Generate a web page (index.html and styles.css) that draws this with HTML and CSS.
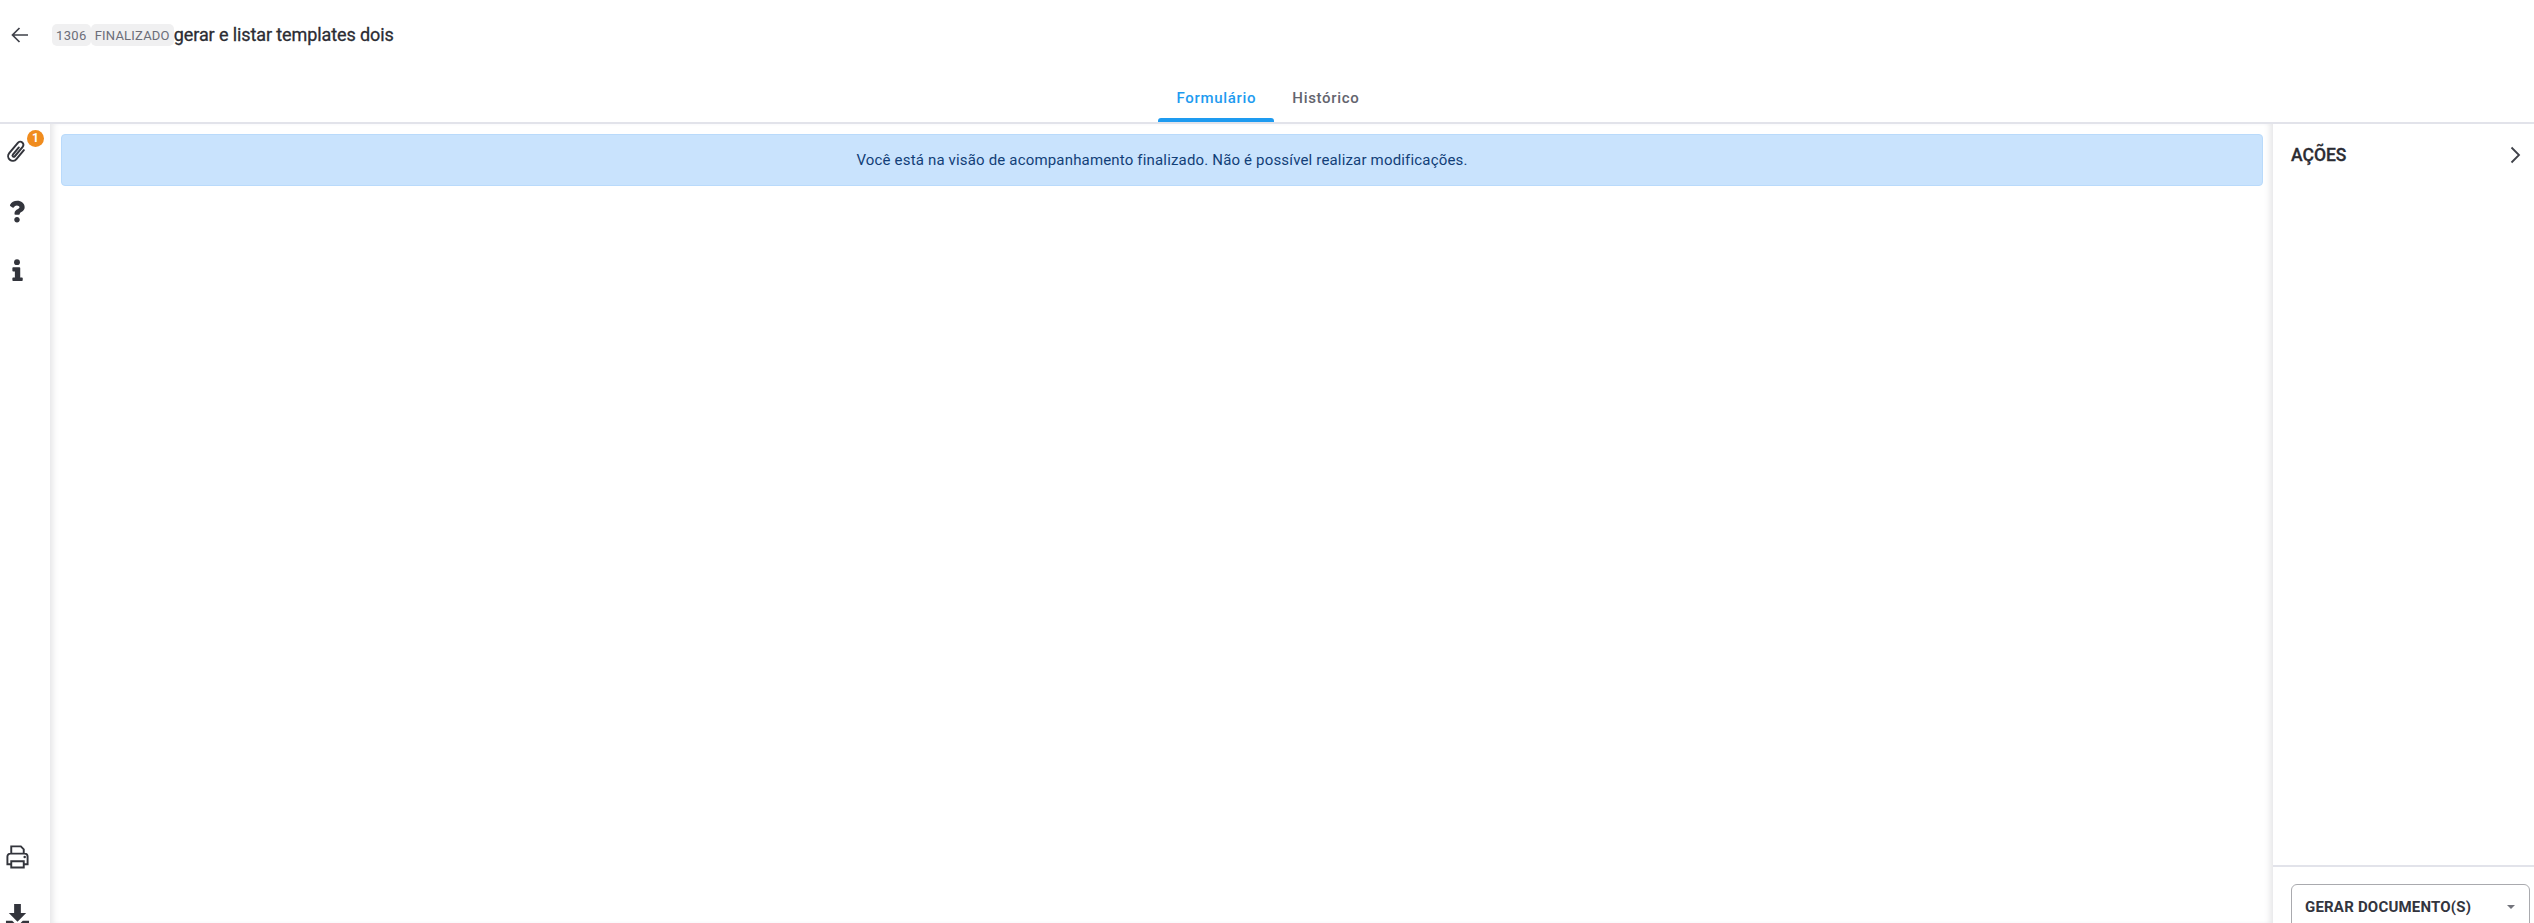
FILE: index.html
```html
<!DOCTYPE html>
<html lang="pt-BR">
<head>
<meta charset="utf-8">
<title>gerar e listar templates dois</title>
<link rel="stylesheet" href="styles.css">
</head>
<body>
<div class="app">
  <header class="header">
    <div class="title-row">
      <button class="back" aria-label="Voltar">
        <svg width="24" height="24" viewBox="0 0 24 24"><path d="M20 12H5M11.500 5L4.500 12l7 7" fill="none" stroke="#3f4149" stroke-width="1.700"/></svg>
      </button>
      <span class="chip">1306</span>
      <span class="chip chip-status">FINALIZADO</span>
      <h1 class="title">gerar e listar templates dois</h1>
    </div>
    <nav class="tabs">
      <a class="tab tab-active">Formulário</a>
      <a class="tab">Histórico</a>
    </nav>
  </header>
  <div class="body">
    <aside class="rail">
      <div class="rail-group rail-top">
        <div class="rail-item">
          <svg width="28" height="28" viewBox="0 0 24 24"><path transform="rotate(40 12 12)" d="M15.500 7V17a4 4 0 0 1-8 0V5.500a2.700 2.700 0 0 1 5.400 0V16a1.100 1.100 0 0 1-2.200 0V8" fill="none" stroke="#33353c" stroke-width="1.700" stroke-linecap="round"/></svg>
          <span class="badge">1</span>
        </div>
        <div class="rail-item">
          <svg width="24" height="24" viewBox="0 0 26 26"><path d="M13.300 2C9.500 2 7.100 3.700 5.500 6.200c-.3.400-.2 1 .2 1.300l2.300 1.800c.4.300 1 .2 1.400-.2 1-1.300 1.900-2.100 3.500-2.100 1.300 0 2.800.8 2.800 2 0 .9-.8 1.400-2 2.100-1.500.8-3.400 1.800-3.400 4.400v.5c0 .5.400 1 1 1h3.800c.5 0 1-.5 1-1v-.3c0-1.800 5.200-1.900 5.200-6.700C21.300 4.800 17.500 2 13.300 2zM13 19.500c-1.700 0-3 1.300-3 3s1.300 3 3 3 3-1.300 3-3-1.300-3-3-3z" fill="#33353c"/></svg>
        </div>
        <div class="rail-item">
          <svg width="24" height="24" viewBox="0 0 26 26"><circle cx="13" cy="4.500" r="3.200" fill="#33353c"/><path d="M8.800 10h6.900c.4 0 .8.300.8.800v10.200h1.900c.4 0 .8.300.8.800v2.400c0 .4-.4.800-.8.800H8.800c-.4 0-.8-.4-.8-.8v-2.400c0-.5.400-.8.800-.8h1.900v-6.400H8.800c-.4 0-.8-.3-.8-.8v-3c0-.5.400-.8.800-.8z" fill="#33353c"/></svg>
        </div>
      </div>
      <div class="rail-group rail-bottom">
        <div class="rail-item">
          <svg width="25" height="25" viewBox="0 0 26 26"><path d="M6.500 10V2.500h10l3 3V10M6.500 21H2.500v-8a3 3 0 0 1 3-3h15a3 3 0 0 1 3 3v8h-4M6.500 18h13v6.500h-13z" fill="none" stroke="#33353c" stroke-width="2"/><circle cx="20.500" cy="13.500" r="1.300" fill="#33353c"/></svg>
        </div>
        <div class="rail-item">
          <svg width="25" height="25" viewBox="0 0 26 26"><path d="M9.500 1h7v9.500h5.500L13 19.500 4 10.500h5.500zM1 18.500h6.500L13 24l5.500-5.500H25V26H1z" fill="#33353c"/></svg>
        </div>
      </div>
    </aside>
    <main class="main">
      <div class="alert">Você está na visão de acompanhamento finalizado. Não é possível realizar modificações.</div>
    </main>
    <aside class="actions">
      <div class="actions-head">
        <span class="actions-title">AÇÕES</span>
        <svg width="24" height="24" viewBox="0 0 24 24"><path d="M8.500 4.500L16 12l-7.500 7.500" fill="none" stroke="#3f4149" stroke-width="1.800"/></svg>
      </div>
      <div class="actions-foot">
        <button class="doc-btn">
          <span>GERAR DOCUMENTO(S)</span>
          <span class="caret"></span>
        </button>
      </div>
    </aside>
  </div>
</div>
</body>
</html>
```
FILE: styles.css
```css
* { box-sizing: border-box; }
html, body { margin: 0; height: 100%; overflow: hidden; background: #fff; }
body { font-family: Roboto, "Liberation Sans", sans-serif; color: #2b2c33; }
.app { height: 923px; display: flex; flex-direction: column; }

.header { height: 124px; flex: none; border-bottom: 2px solid #e2e3ea; display: flex; flex-direction: column; }
.title-row { display: flex; align-items: center; height: 69px; padding-left: 8px; }
.back { width: 24px; height: 24px; padding: 0; border: 0; background: none; margin-right: 20px; display: flex; }
.chip { height: 22px; line-height: 23px; padding: 0 4px; background: #f0f0f1; border-radius: 5px; font-size: 13px; letter-spacing: .35px; color: #6b6d78; }
.chip-status { letter-spacing: .22px; }
.title { margin: 0; font-size: 18px; font-weight: 400; letter-spacing: -.1px; color: #2b2c33; -webkit-text-stroke: .3px #2b2c33; }

.tabs { display: flex; justify-content: center; height: 53px; padding-left: 2px; }
.tab { position: relative; display: flex; align-items: center; padding: 7px 18px 3px; font-size: 15px; font-weight: 500; letter-spacing: .7px; color: #63646e; }
.tab-active { color: #1e9bf0; }
.tab-active::after { content: ""; position: absolute; left: 0; right: 0; bottom: 0; height: 4px; background: #1e9bf0; border-radius: 3px 3px 0 0; }

.body { flex: 1; min-height: 0; display: flex; }
.rail { width: 50px; flex: none; display: flex; flex-direction: column; justify-content: space-between; overflow: hidden; }
.rail-group { display: flex; flex-direction: column; }
.rail-top { padding-top: 16px; gap: 35px; }
.rail-bottom { margin-bottom: -4px; gap: 35px; }
.rail-item { position: relative; width: 34px; height: 24px; display: flex; justify-content: center; align-items: center; }
.badge { position: absolute; top: -10px; left: 27px; width: 17px; height: 17px; border-radius: 50%; background: #f08c1e; color: #fff; font-size: 12px; font-weight: 700; line-height: 17px; text-align: center; }

.main { flex: 1; min-width: 0; padding: 10px 10px 0 11px; box-shadow: inset 7px 0 6px -4px #e6e6e8, inset -7px 0 6px -4px #e6e6e8; }
.alert { height: 52px; display: flex; align-items: center; justify-content: center; background: #c9e3fd; border: 1px solid #b9dafb; border-radius: 4px; font-size: 15px; letter-spacing: .17px; color: #123f78; }

.actions { width: 261px; flex: none; display: flex; flex-direction: column; justify-content: space-between; overflow: hidden; }
.actions-head { display: flex; align-items: center; justify-content: space-between; padding: 19px 7px 0 18px; }
.actions-title { font-size: 17.500px; font-weight: 500; color: #2b2c33; -webkit-text-stroke: .3px #2b2c33; }
.actions-foot { height: 58px; flex: none; border-top: 2px solid #e2e3ea; padding: 17px 4px 0 18px; }
.doc-btn { width: 239px; height: 60px; padding: 13px 14px 0 13px; display: flex; justify-content: space-between; background: #fff; border: 1px solid #a9aaae; border-radius: 6px; font-family: inherit; font-size: 15px; font-weight: 700; letter-spacing: .2px; color: #33353e; text-align: left; }
.caret { width: 0; height: 0; margin-top: 7px; border-left: 4px solid transparent; border-right: 4px solid transparent; border-top: 4px solid #73747c; }
```
